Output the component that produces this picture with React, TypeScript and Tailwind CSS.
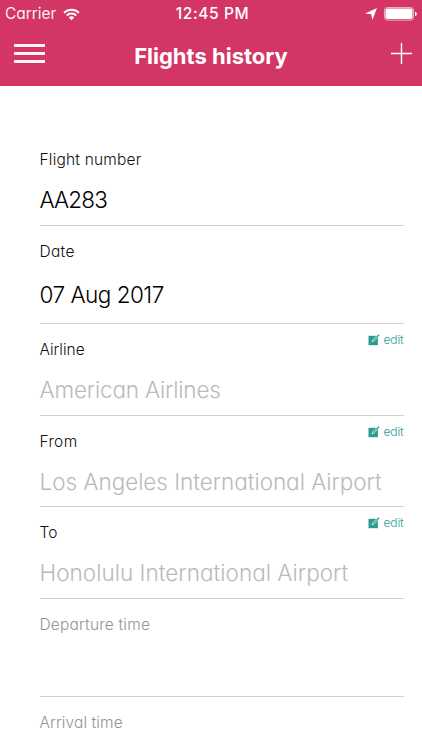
import clsx from 'clsx'

interface Field {
  label: string
  value?: string
  // Row height and letter spacing for the row's texts
  rowClass: string
  labelClass: string
  valueClass?: string
  editable?: boolean
}

const FIELDS: Field[] = [
  {
    label: 'Flight number',
    value: 'AA283',
    rowClass: 'h-[92px]',
    labelClass: 'text-[#111] tracking-[0.2px]',
    valueClass: 'mt-[14px] text-black tracking-[-0.9px]',
  },
  {
    label: 'Date',
    value: '07 Aug 2017',
    rowClass: 'h-[98px]',
    labelClass: 'text-[#111] tracking-[0.3px]',
    valueClass: 'mt-[17px] text-black tracking-[-0.5px]',
  },
  {
    label: 'Airline',
    value: 'American Airlines',
    rowClass: 'h-[92px]',
    labelClass: 'text-[#111]',
    valueClass: 'mt-[14px] text-[#bababa] tracking-[-0.18px]',
    editable: true,
  },
  {
    label: 'From',
    value: 'Los Angeles International Airport',
    rowClass: 'h-[91px]',
    labelClass: 'text-[#111] tracking-[0.35px]',
    valueClass: 'mt-[14px] text-[#bababa] tracking-[-0.04px]',
    editable: true,
  },
  {
    label: 'To',
    value: 'Honolulu International Airport',
    rowClass: 'h-[92px]',
    labelClass: 'text-[#111]',
    valueClass: 'mt-[14px] text-[#bababa] tracking-[0.02px]',
    editable: true,
  },
  {
    label: 'Departure time',
    rowClass: 'h-[98px]',
    labelClass: 'text-[#949494] tracking-[0.2px]',
  },
  {
    label: 'Arrival time',
    rowClass: 'h-[98px]',
    labelClass: 'text-[#949494] tracking-[0.12px]',
  },
]

export default function App() {
  return (
    <div className="flex h-[750px] w-[422px] flex-col overflow-hidden bg-white font-['Inter',sans-serif] [font-feature-settings:'cv11']">
      <header className="h-[86px] shrink-0 bg-[#d33665] text-white">
        <StatusBar />
        <NavBar />
      </header>

      <main className="ml-[39.5px] mr-[18.5px] pt-[48px]">
        {FIELDS.map((field) => (
          <FieldRow key={field.label} field={field} />
        ))}
      </main>
    </div>
  )
}

function StatusBar() {
  return (
    <div className="grid h-7 grid-cols-3 items-center pl-[5px] pr-[5px]">
      <div className="flex items-center gap-[7px]">
        <span className="text-[15.5px] leading-5 tracking-[-0.05px] text-white/95">Carrier</span>
        <WifiIcon />
      </div>
      <span className="whitespace-nowrap pl-[3px] text-center text-[15.5px] font-medium leading-5 tracking-[0.6px]">
        12:45 PM
      </span>
      <div className="flex items-center justify-end gap-[7px]">
        <LocationIcon />
        <BatteryIcon />
      </div>
    </div>
  )
}

function NavBar() {
  return (
    <div className="grid h-[58px] grid-cols-[1fr_auto_1fr] items-start pl-[14px] pr-[9px]">
      <button aria-label="Menu" className="mt-[16px] flex w-[31px] flex-col gap-[5px]">
        <span className="h-[3px] bg-white/95" />
        <span className="h-[3px] bg-white/95" />
        <span className="h-[3px] bg-white/95" />
      </button>
      <h1 className="mt-[14px] -translate-x-[2.5px] whitespace-nowrap text-[22px] font-bold leading-7">
        Flights history
      </h1>
      <button aria-label="Add" className="mt-[14px] justify-self-end">
        <svg width="23" height="23" viewBox="0 0 23 23" fill="none" stroke="#fff" strokeWidth="1.4">
          <path d="M1 11.5h21M11.5 1v21" />
        </svg>
      </button>
    </div>
  )
}

function FieldRow({ field }: { field: Field }) {
  return (
    <div className={clsx('relative border-b border-[#d0d0d0]', field.rowClass)}>
      <div className={clsx('pt-[16px] text-[15.5px] font-[350] leading-5', field.labelClass)}>
        {field.label}
      </div>
      {field.value && (
        <div className={clsx('whitespace-nowrap text-[22.5px] font-light leading-8', field.valueClass)}>
          {field.value}
        </div>
      )}
      {field.editable && (
        <button className="absolute right-0 top-[8px] flex items-center gap-[4px] text-[#2a9d8f]">
          <EditIcon />
          <span className="text-[12px] font-[350] leading-4 tracking-[-0.15px]">edit</span>
        </button>
      )}
    </div>
  )
}

function EditIcon() {
  return (
    <svg width="12" height="12" viewBox="0 0 12 12" fill="none">
      <path d="M.5 1.8h9.4v9.4H.5z" fill="#2a9d8f" />
      <path d="M5 6.8 10.8 1" stroke="#fff" strokeWidth="2.3" />
      <path d="M5.2 6.6 11.1.7" stroke="#2a9d8f" strokeWidth="1.3" />
      <path d="m3.5 8.3.8-2 1.2 1.2z" fill="#fff" />
    </svg>
  )
}

function WifiIcon() {
  return (
    <svg width="17" height="13" viewBox="0 0 17 13" fill="none" stroke="#fff" strokeWidth="1.9">
      <path d="M1 4.8a10.7 10.7 0 0 1 15 0" />
      <path d="M3.7 7.5a6.8 6.8 0 0 1 9.6 0" />
      <path d="M8.5 12.3 5.8 9.6a3.9 3.9 0 0 1 5.4 0z" fill="#fff" stroke="none" />
    </svg>
  )
}

function LocationIcon() {
  return (
    <svg width="12" height="12" viewBox="0 0 12 12" fill="#fff">
      <path d="M12 0 7.4 12 6.2 6.2 0 5.4z" />
    </svg>
  )
}

function BatteryIcon() {
  return (
    <svg width="33" height="14" viewBox="0 0 33 14" fill="none">
      <rect x=".5" y=".5" width="29" height="12.6" rx="2.8" stroke="#fff" strokeOpacity=".6" />
      <rect x="1.5" y="1.5" width="27" height="10.6" rx="1.8" fill="#fff" />
      <path d="M31 4.7c1.3.4 1.8 1.2 1.8 2.2s-.5 1.8-1.8 2.2z" fill="#fff" />
    </svg>
  )
}
